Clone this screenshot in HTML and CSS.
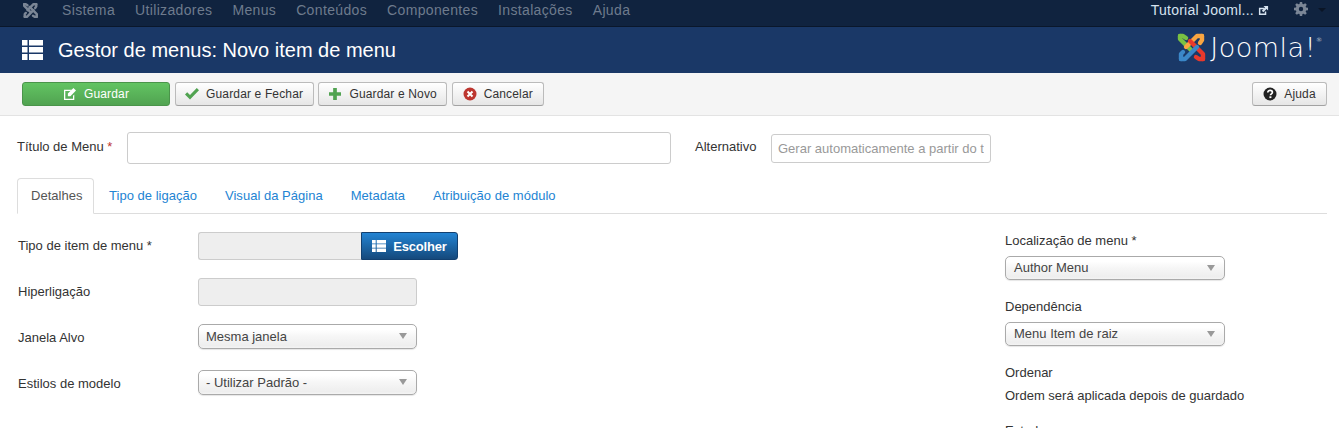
FILE: index.html
```html
<!DOCTYPE html>
<html lang="pt">
<head>
    <meta charset="UTF-8">
    <title>Gestor de menus: Novo item de menu</title>
    <link rel="stylesheet" href="styles.css">
</head>
<body>
    <nav class="navbar">
        <svg class="nav-logo" viewBox="0 0 31 31"><use href="#joomla-mark"/></svg>
        <ul class="nav-menu">
            <li>Sistema</li>
            <li>Utilizadores</li>
            <li>Menus</li>
            <li>Conteúdos</li>
            <li>Componentes</li>
            <li>Instalações</li>
            <li>Ajuda</li>
        </ul>
        <a class="site-link">Tutorial Jooml...
            <svg class="ext-icon" viewBox="0 0 12 12"><path d="M1 3h6v1.6H2.600v4.800h4.800V7H9v4H1z"/><path d="M6 1h5v5L9.300 4.300 5.800 7.800 4.200 6.200l3.500-3.500z"/></svg>
        </a>
        <svg class="gear" viewBox="0 0 16 16"><path fill-rule="evenodd" d="M6.700 0h2.600l.4 2.200 1.200.5L12.800 1.400l1.800 1.800-1.300 1.900.5 1.200 2.200.4v2.600l-2.200.4-.5 1.200 1.300 1.900-1.800 1.800-1.900-1.300-1.200.5-.4 2.200H6.700l-.4-2.200-1.200-.5-1.900 1.300-1.800-1.800 1.300-1.900-.5-1.200L0 9.300V6.700l2.200-.4.500-1.200-1.300-1.900 1.800-1.800 1.900 1.300 1.200-.5zM8 5.500a2.500 2.500 0 1 0 0 5 2.500 2.500 0 0 0 0-5z"/></svg>
        <span class="caret"></span>
    </nav>

    <header class="page-header">
        <svg class="title-icon" viewBox="0 0 21 20"><path d="M0 0h5.500v5.500H0zM7 0h14v5.500H7zM0 7h5.500v5.500H0zM7 7h14v5.500H7zM0 14h5.500v6H0zM7 14h14v6H7z"/></svg>
        <h1>Gestor de menus: Novo item de menu</h1>
        <div class="brand">
            <svg class="brand-mark" viewBox="0 0 31 31">
                <g id="joomla-mark" fill="none" stroke-width="4.400" stroke-linecap="round" stroke-linejoin="round">
                    <path class="arm-green" d="M4 4v3l11 11"/>
                    <path class="arm-green" d="M4 4h3l3 2"/>
                    <path class="arm-orange" d="M26 4h-5L10 15"/>
                    <path class="arm-orange" d="M26 4v4l-2 3"/>
                    <path class="arm-red" d="M27 27v-5L14 9"/>
                    <path class="arm-red" d="M27 27h-4l-3-2"/>
                    <path class="arm-blue" d="M5 27h4l12-12"/>
                    <path class="arm-blue" d="M5 27v-5l2-2"/>
                </g>
            </svg>
            <span class="brand-name">Joomla!<sup>®</sup></span>
        </div>
    </header>

    <div class="toolbar">
        <button class="btn btn-save">
            <svg class="icon" viewBox="0 0 14 14"><path fill="#fff" d="M0 2h9L7.500 3.500H1.500v9h9V9L12 7.500V14H0z"/><path fill="#fff" d="M11 0l3 3-6.500 6.500H4.500v-3z"/></svg>
            Guardar
        </button>
        <button class="btn btn-close">
            <svg class="icon" viewBox="0 0 14 12"><path fill="#51a351" d="M0 6.500L2.200 4.300 5 7 11.800 0 14 2.200 5 11.500z"/></svg>
            Guardar e Fechar
        </button>
        <button class="btn btn-new">
            <svg class="icon" viewBox="0 0 13 13"><path fill="#51a351" d="M4.500 0h4v4.500H13v4H8.500V13h-4V8.500H0v-4h4.500z"/></svg>
            Guardar e Novo
        </button>
        <button class="btn btn-cancel">
            <svg class="icon" viewBox="0 0 14 14"><circle cx="7" cy="7" r="6.500" fill="#bd362f"/><path d="M4.500 4.500l5 5M9.500 4.500l-5 5" stroke="#fff" stroke-width="2"/></svg>
            Cancelar
        </button>
        <button class="btn btn-help">
            <svg class="icon" viewBox="0 0 14 14"><circle cx="7" cy="7" r="6.500" fill="#222"/><path d="M4.800 5.500C4.800 4 6 3.300 7.100 3.300 8.400 3.300 9.400 4.100 9.400 5.300 9.400 6.800 7.500 6.800 7.500 8.200" fill="none" stroke="#fff" stroke-width="1.700"/><path d="M6.400 9.300h2v1.800h-2z" fill="#fff"/></svg>
            Ajuda
        </button>
    </div>

    <main class="content">
        <div class="title-row">
            <label class="title-label">Título de Menu <span class="star">*</span></label>
            <input class="title-input" type="text">
            <label class="alias-label">Alternativo</label>
            <input class="alias-input" type="text" placeholder="Gerar automaticamente a partir do título">
        </div>

        <ul class="tabs">
            <li class="tab active">Detalhes</li>
            <li class="tab">Tipo de ligação</li>
            <li class="tab">Visual da Página</li>
            <li class="tab">Metadata</li>
            <li class="tab">Atribuição de módulo</li>
        </ul>

        <div class="columns">
            <section class="col-main">
                <div class="field">
                    <label>Tipo de item de menu *</label>
                    <div class="input-append">
                        <div class="readonly joined"></div>
                        <button class="btn-choose">
                            <svg class="icon" viewBox="0 0 14 12"><path fill="#fff" d="M0 0h3.700v3.400H0zM4.700 0H14v3.400H4.700zM0 4.300h3.700v3.400H0zM4.700 4.300H14v3.400H4.700zM0 8.600h3.700V12H0zM4.700 8.600H14V12H4.700z"/></svg>
                            Escolher
                        </button>
                    </div>
                </div>
                <div class="field">
                    <label>Hiperligação</label>
                    <div class="readonly"></div>
                </div>
                <div class="field field-select">
                    <label>Janela Alvo</label>
                    <div class="select">Mesma janela</div>
                </div>
                <div class="field field-select">
                    <label>Estilos de modelo</label>
                    <div class="select">- Utilizar Padrão -</div>
                </div>
            </section>

            <aside class="col-side">
                <label>Localização de menu *</label>
                <div class="select">Author Menu</div>
                <label>Dependência</label>
                <div class="select">Menu Item de raiz</div>
                <label>Ordenar</label>
                <p>Ordem será aplicada depois de guardado</p>
                <label>Estado</label>
            </aside>
        </div>
    </main>
</body>
</html>
```

FILE: styles.css
```css
* {
    box-sizing: border-box;
    margin: 0;
    padding: 0;
}

html, body {
    height: 100vh;
    overflow: hidden;
}

body {
    font-family: 'Liberation Sans', Arial, sans-serif;
    font-size: 13px;
    line-height: 18px;
    color: #333;
    background: #fff;
}

ul {
    list-style: none;
}

/* top bar */
.navbar {
    display: flex;
    align-items: center;
    height: 27px;
    padding-bottom: 6px;
    background: #10233f;
    border-bottom: 1px solid #0a172b;
}

.nav-logo {
    --arm-green: #7b8696;
    --arm-orange: #7b8696;
    --arm-red: #7b8696;
    --arm-blue: #7b8696;
    width: 17px;
    height: 17px;
    margin-left: 22px;
}

.nav-menu {
    display: flex;
    gap: 20px;
    margin-left: 23px;
    font-size: 14px;
    letter-spacing: 0.35px;
    color: #6e7b8d;
}

.site-link {
    display: flex;
    align-items: center;
    gap: 4px;
    margin-left: auto;
    font-size: 14px;
    letter-spacing: 0.25px;
    color: #d6e2ef;
}

.ext-icon {
    width: 11px;
    height: 11px;
    fill: #d6e2ef;
}

.gear {
    width: 14px;
    height: 14px;
    margin-left: 25px;
    margin-top: -2px;
    fill: #7b8696;
}

.caret {
    width: 0;
    height: 0;
    margin-left: 10px;
    margin-right: 13px;
    border: 4px solid transparent;
    border-top-color: #0a1526;
    border-bottom: 0;
}

/* title bar */
.page-header {
    display: flex;
    align-items: center;
    height: 46px;
    padding-left: 22px;
    background: #1a3867;
}

.title-icon {
    width: 21px;
    height: 20px;
    fill: #fff;
}

.page-header h1 {
    margin-left: 15px;
    font-size: 20px;
    font-weight: normal;
    color: #fff;
}

.brand {
    display: flex;
    align-items: center;
    gap: 3px;
    margin-left: auto;
    margin-right: 17px;
    margin-top: -5px;
}

.brand-mark {
    width: 31px;
    height: 31px;
}

.arm-green { stroke: var(--arm-green, #7ac143); }
.arm-orange { stroke: var(--arm-orange, #f9a541); }
.arm-red { stroke: var(--arm-red, #e8392c); }
.arm-blue { stroke: var(--arm-blue, #3b87c8); }

.brand-name {
    font-family: 'DejaVu Sans', sans-serif;
    font-size: 27px;
    font-weight: 200;
    letter-spacing: 0.5px;
    line-height: 31px;
    color: #fff;
}

.brand-name sup {
    font-size: 6px;
    letter-spacing: 0;
    line-height: 0;
    vertical-align: 15px;
}

/* toolbar */
.toolbar {
    display: flex;
    align-items: center;
    gap: 4.600px;
    height: 43px;
    padding: 0 12px 1px 22px;
    background: #f5f5f5;
    border-bottom: 1px solid #e3e3e3;
}

.btn {
    display: flex;
    align-items: center;
    justify-content: center;
    gap: 7px;
    height: 24px;
    font-family: inherit;
    font-size: 12px;
    letter-spacing: 0.15px;
    color: #333;
    background: linear-gradient(#fff, #e6e6e6);
    border: 1px solid #bbb;
    border-bottom-color: #a2a2a2;
    border-radius: 3px;
}

.btn .icon {
    width: 14px;
    height: 12px;
}

.btn-save {
    width: 148px;
    color: #fff;
    background: linear-gradient(#62c462, #51a351);
    border-color: #4a944a;
}

.btn-close { width: 139px; }
.btn-new { width: 129px; }
.btn-cancel { width: 92px; }

.btn-help {
    width: 75px;
    margin-left: auto;
}

.btn-help .icon {
    height: 14px;
}

.btn-cancel .icon {
    height: 14px;
}

/* form */
.content {
    padding: 16px 12px 0 17px;
}

.title-row {
    display: flex;
    align-items: center;
    height: 32px;
}

.title-row label {
    padding-bottom: 2px;
}

.title-label {
    width: 110px;
}

.star {
    color: #bd362f;
}

input {
    font-family: inherit;
    font-size: 13px;
    color: #333;
    background: #fff;
    border: 1px solid #ccc;
    border-radius: 3px;
}

input::placeholder {
    color: #999;
}

.title-input {
    width: 544px;
    height: 32px;
}

.alias-label {
    margin-left: 24px;
    width: 76px;
}

.alias-input {
    width: 220px;
    height: 29px;
    padding: 0 6px;
}

.tabs {
    display: flex;
    height: 36px;
    margin-top: 14px;
    letter-spacing: 0.02px;
    border-bottom: 1px solid #ddd;
}

.tab {
    height: 36px;
    padding: 8px 13px;
    color: #2384d3;
    border: 1px solid transparent;
    border-radius: 4px 4px 0 0;
}

.tab.active {
    width: 77px;
    margin-right: 1px;
    color: #555;
    background: #fff;
    border-color: #ddd #ddd #fff;
}

.columns {
    display: grid;
    grid-template-columns: 988px 1fr;
}

.col-main {
    padding-top: 18px;
}

.field {
    display: flex;
    align-items: center;
    height: 28px;
    margin-bottom: 18px;
    padding-left: 1px;
}

.field label {
    width: 180px;
}

.field-select {
    height: 25px;
    margin-bottom: 21px;
}

.field-select label {
    padding-top: 2px;
}

.field-select .select {
    padding-top: 3px;
}

.input-append {
    display: flex;
}

.readonly {
    width: 219px;
    height: 28px;
    background: #eee;
    border: 1px solid #ccc;
    border-radius: 3px;
}

.readonly.joined {
    width: 163px;
    border-right: 0;
    border-radius: 3px 0 0 3px;
}

.btn-choose {
    display: flex;
    align-items: center;
    justify-content: center;
    gap: 7px;
    width: 97px;
    height: 28px;
    font-family: inherit;
    font-size: 13px;
    font-weight: bold;
    letter-spacing: -0.2px;
    color: #fff;
    background: linear-gradient(#2384d3, #15497c);
    border: 1px solid #124070;
    border-radius: 0 3px 3px 0;
}

.btn-choose .icon {
    width: 14px;
    height: 12px;
}

.select {
    position: relative;
    width: 219px;
    height: 25px;
    padding: 2px 7px;
    color: #444;
    background: linear-gradient(#fff 20%, #f6f6f6 50%, #eee 90%, #f4f4f4);
    border: 1px solid #aaa;
    border-radius: 5px;
    box-shadow: 0 1px 1px rgba(0, 0, 0, 0.1);
}

/* chosen arrow */
.select::after {
    content: '';
    position: absolute;
    top: 8px;
    right: 9px;
    border: 4px solid transparent;
    border-top: 6px solid #999;
    border-bottom: 0;
}

.col-side {
    display: flex;
    flex-direction: column;
    padding-top: 18px;
}

.col-side label {
    display: block;
    margin-bottom: 6px;
}

.col-side .select {
    width: 220px;
    height: 24px;
    margin-bottom: 18px;
    padding-left: 8px;
}

.col-side p {
    margin-top: -1px;
    margin-bottom: 17px;
}
```
